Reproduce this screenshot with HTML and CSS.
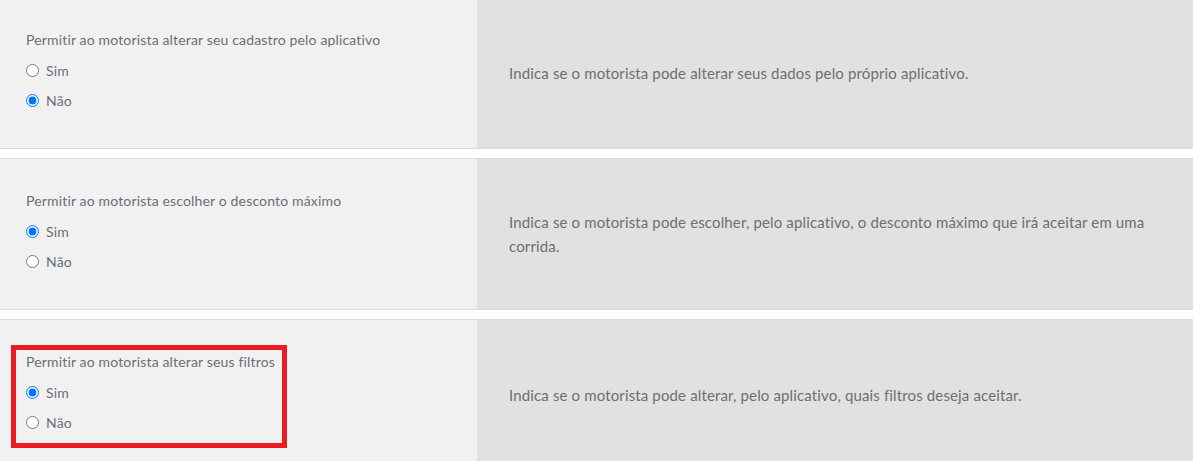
FILE: index.html
```html
<!DOCTYPE html>
<html>
<head>
  <title>Configurações do motorista</title>
  <meta charset='utf-8'>
  <meta name="viewport" content="width=device-width, initial-scale=1">
  <link rel="stylesheet" href="styles.css">
</head>
<body>

  <div class="settings">
    <div class="setting">
      <div class="setting-field">
        <div class="field">
          <p class="field-label">Permitir ao motorista alterar seu cadastro pelo aplicativo</p>
          <label class="option"><input type="radio" name="cadastro"> Sim</label>
          <label class="option"><input type="radio" name="cadastro" checked> Não</label>
        </div>
      </div>
      <div class="setting-help">
        Indica se o motorista pode alterar seus dados pelo próprio aplicativo.
      </div>
    </div>

    <div class="setting">
      <div class="setting-field">
        <div class="field">
          <p class="field-label">Permitir ao motorista escolher o desconto máximo</p>
          <label class="option"><input type="radio" name="desconto" checked> Sim</label>
          <label class="option"><input type="radio" name="desconto"> Não</label>
        </div>
      </div>
      <div class="setting-help">
        Indica se o motorista pode escolher, pelo aplicativo, o desconto máximo que irá aceitar em uma corrida.
      </div>
    </div>

    <div class="setting">
      <div class="setting-field">
        <div class="field field-marked">
          <p class="field-label">Permitir ao motorista alterar seus filtros</p>
          <label class="option"><input type="radio" name="filtros" checked> Sim</label>
          <label class="option"><input type="radio" name="filtros"> Não</label>
        </div>
      </div>
      <div class="setting-help">
        Indica se o motorista pode alterar, pelo aplicativo, quais filtros deseja aceitar.
      </div>
    </div>
  </div>

</body>
</html>
```

FILE: styles.css
```css
* {
  box-sizing: border-box;
}
body {
  background: white;
  font-family: Lato, 'Noto Sans', sans-serif;
  margin: 0;
  overflow: hidden;
}
.settings {
  margin-top: -3px;
}
.setting {
  border-top: 1px solid #dcdcdc;
  border-bottom: 1px solid #dcdcdc;
  display: flex;
  height: 152px;
  margin-bottom: 9px;
}
.setting-field {
  align-items: flex-start;
  background: #f1f1f1;
  border-right: 1px solid #e2e2e2;
  display: flex;
  padding: 30px 0 0 16px;
  width: 478px;
}
.field {
  display: flex;
  flex-direction: column;
  padding: 2px 7px 11px 10px;
}
.field-marked {
  box-shadow: 0 0 0 5px #ed1c24;
}
.field-label {
  color: #6b6f78;
  font-size: 14px;
  letter-spacing: 0.16px;
  line-height: 20px;
  margin: 0 0 10px;
}
.option {
  align-items: center;
  color: #6b6f78;
  display: flex;
  font-size: 14px;
  gap: 7px;
  height: 20px;
  letter-spacing: 0.16px;
  margin-bottom: 10px;
}
.option:last-child {
  margin-bottom: 0;
}
.option input {
  height: 13px;
  margin: 0;
  width: 13px;
}
.setting-help {
  align-items: center;
  background: #e1e1e1;
  color: #6f6f6f;
  display: flex;
  flex: 1;
  font-size: 15px;
  letter-spacing: 0.14px;
  line-height: 24px;
  padding: 0 40px 0 31px;
}
```
